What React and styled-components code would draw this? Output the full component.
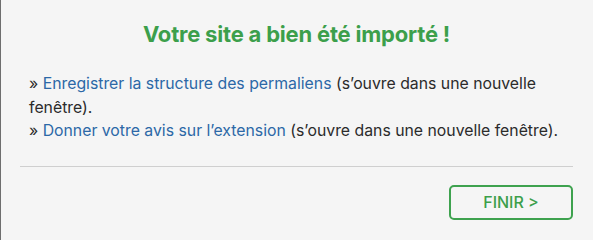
import React from "react";
import styled, { createGlobalStyle } from "styled-components";

const GlobalStyle = createGlobalStyle`
  html, body {
    margin: 0;
    padding: 0;
    background: #f5f5f5;
  }
  * {
    box-sizing: border-box;
  }
`;

const Dialog = styled.div`
  width: 593px;
  height: 240px;
  background: #f5f5f5;
  border-left: 1px solid #6e6e6e;
  font-family: Inter, "Liberation Sans", sans-serif;
  color: #2b2b2b;
  display: flex;
  flex-direction: column;
  padding: 0 20px 0 19px;
`;

const Title = styled.h2`
  margin: 20px 0 0;
  font-size: 22px;
  font-weight: 700;
  line-height: 28px;
  text-align: center;
  color: #3c9f4b;
  letter-spacing: -0.2px;
`;

const Links = styled.div`
  margin-top: 24px;
  padding: 0 8px 0 9px;
  font-size: 15.8px;
  line-height: 23.5px;
`;

const Line = styled.p`
  margin: 0;
`;

const Link = styled.a`
  color: #2c68a7;
  text-decoration: none;
`;

const Separator = styled.hr`
  margin: 23px 0 0;
  border: 0;
  border-top: 1px solid #cfcfcf;
  height: 0;
`;

const Footer = styled.div`
  display: flex;
  justify-content: flex-end;
  padding-top: 18px;
`;

const Button = styled.button`
  width: 124px;
  height: 35px;
  border: 2px solid #3ea24f;
  border-radius: 5px;
  background: transparent;
  color: #3c9f4b;
  font-family: Inter, "Liberation Sans", sans-serif;
  font-size: 16px;
  font-weight: 500;
  cursor: pointer;
`;

const App = () => {
  return (
    <>
      <GlobalStyle />
      <Dialog>
        <Title>Votre site a bien été importé !</Title>
        <Links>
          <Line>
            » <Link href="#">Enregistrer la structure des permaliens</Link> (s’ouvre dans une nouvelle fenêtre).
          </Line>
          <Line>
            » <Link href="#">Donner votre avis sur l’extension</Link> (s’ouvre dans une nouvelle fenêtre).
          </Line>
        </Links>
        <Separator />
        <Footer>
          <Button>FINIR &gt;</Button>
        </Footer>
      </Dialog>
    </>
  );
};

export default App;
